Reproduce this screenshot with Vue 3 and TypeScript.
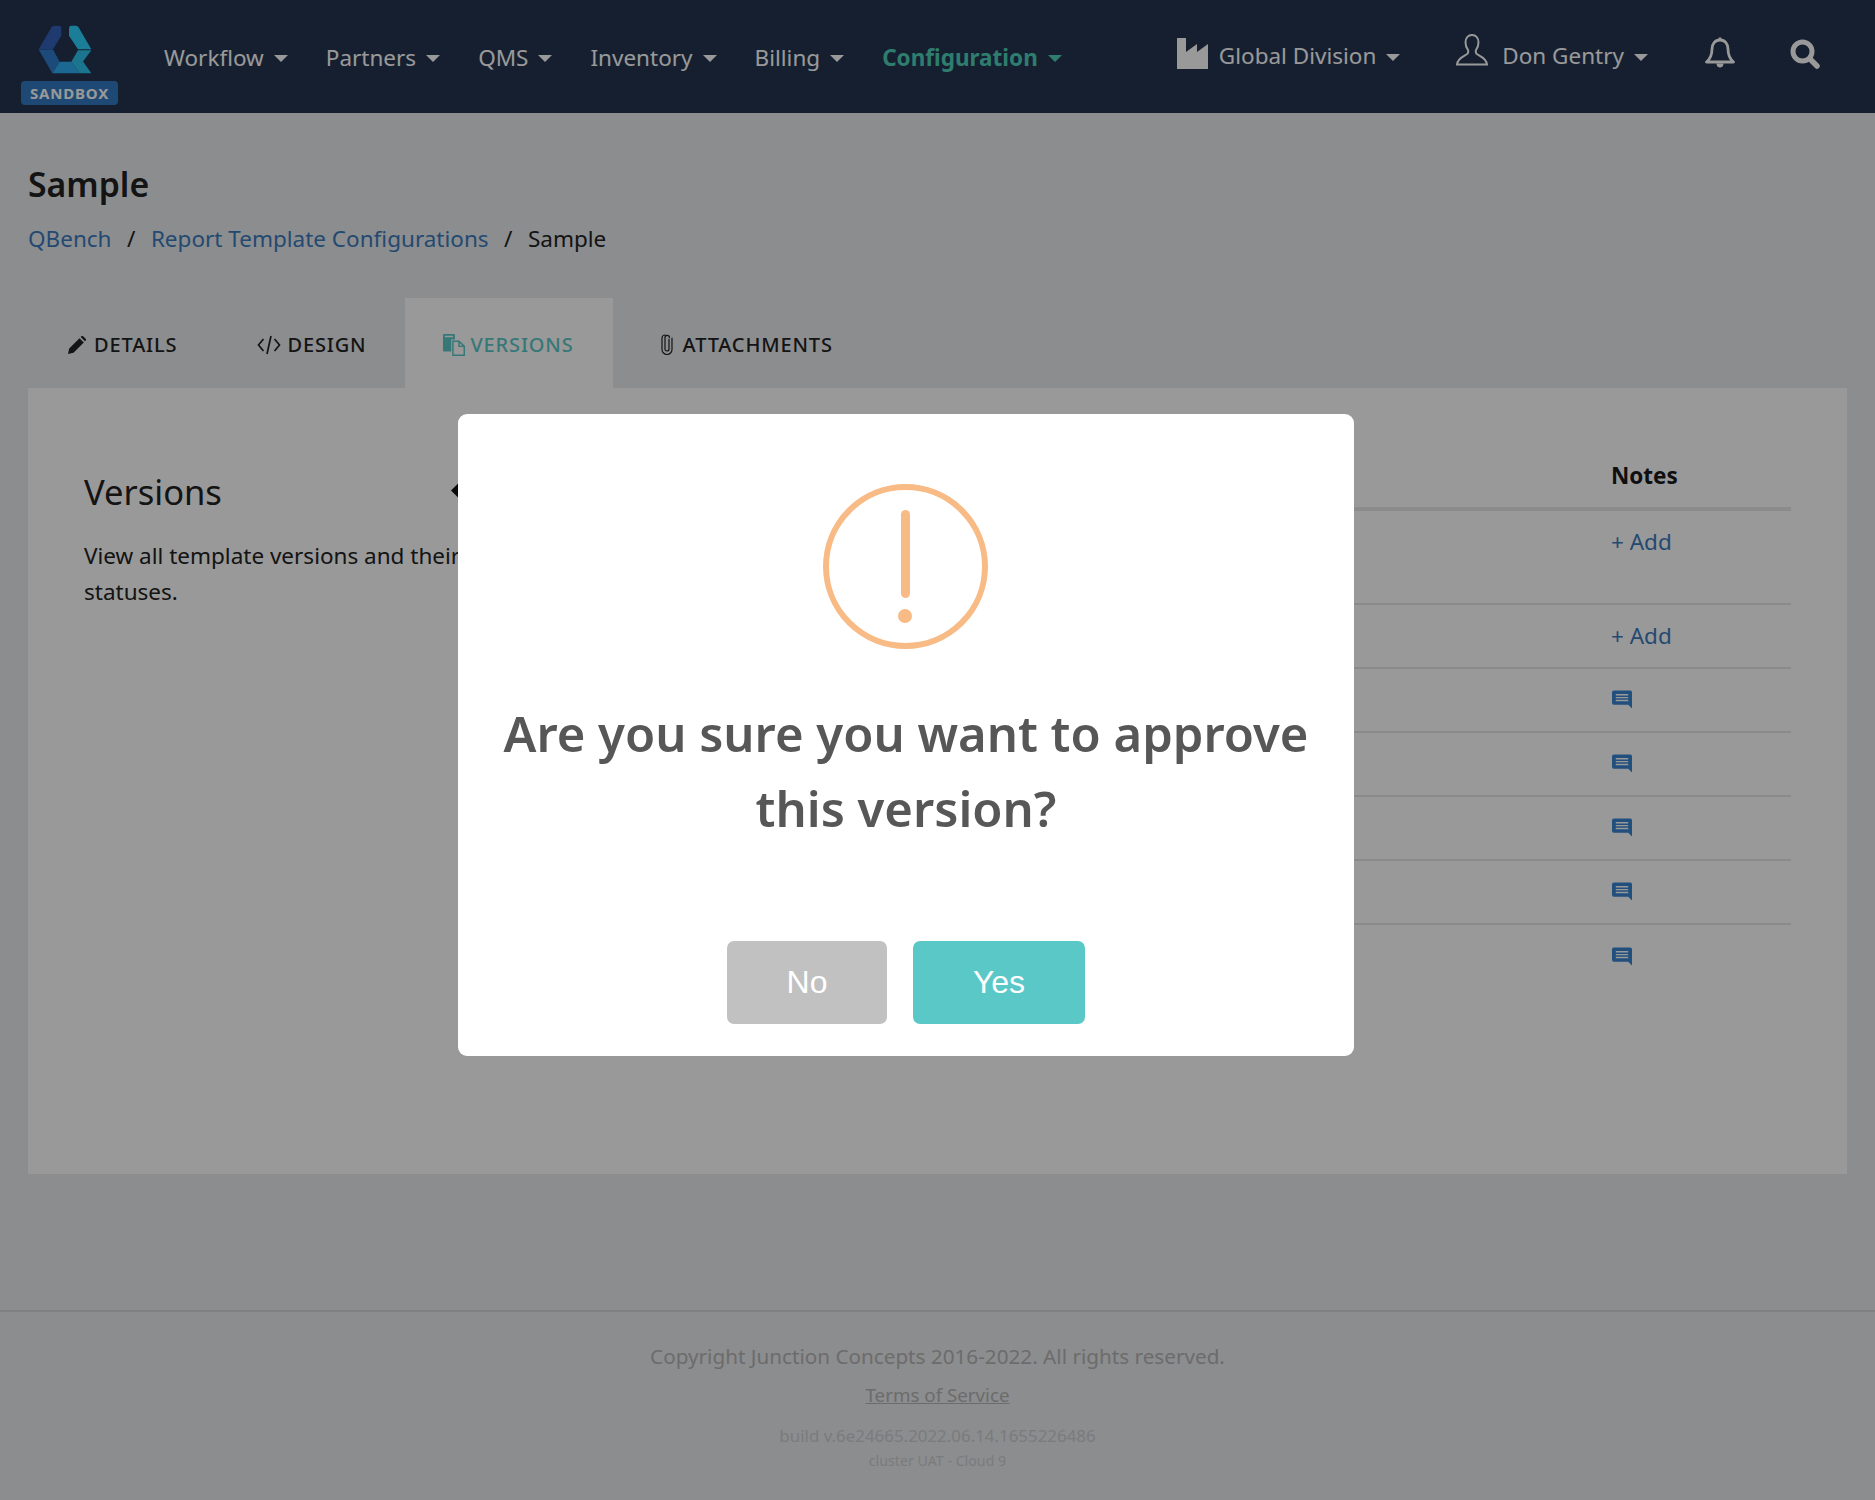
<script setup lang="ts">
interface NavItem { label: string; active?: boolean }
const navItems: NavItem[] = [
  { label: 'Workflow' },
  { label: 'Partners' },
  { label: 'QMS' },
  { label: 'Inventory' },
  { label: 'Billing' },
  { label: 'Configuration', active: true },
]
const noteRows: Array<'add' | 'note'> = ['add', 'add', 'note', 'note', 'note', 'note', 'note']
</script>

<template>
  <div class="page">
    <header class="topbar">
      <div class="brand">
        <svg class="logo" viewBox="85 43 162 146" aria-hidden="true">
          <path fill="#3262b8" d="M135 45h13q7 0 7 7v23l-25 40H87l38-65q4-5 10-5z" />
          <path fill="#307cce" d="M87 116h43l20 37-22 34z" />
          <path fill="#2db0f6" d="M150 153h35l25 34h-82z" />
          <path fill="#2ec4ee" d="M185 153l20-35h40l-25 34 25 35h-35z" />
          <path fill="#2dd2ff" d="M178 52q0-7 7-7h14q5 0 8 5l38 65h-40l-27-40z" />
        </svg>
        <span class="badge">SANDBOX</span>
      </div>

      <nav class="main-nav">
        <a v-for="item in navItems" :key="item.label" class="nav-item" :class="{ active: item.active }">
          {{ item.label }}<i class="caret"></i>
        </a>
      </nav>

      <div class="right-nav">
        <a class="nav-item division">
          <svg class="factory" viewBox="0 0 31 31" aria-hidden="true">
            <path fill="currentColor" d="M0 0h9v14l11-8v8l11-8v25H0z" />
          </svg>
          Global Division<i class="caret"></i>
        </a>
        <a class="nav-item user">
          <svg class="user-icon" viewBox="0 0 32 32" aria-hidden="true">
            <path fill="none" stroke="currentColor" stroke-width="2" d="M16 1c-4 0-6.500 3-6.500 7.500 0 3.500 1.500 6 2.500 7.500 .5 1.500 0 3.500-1.500 4.500C7 22.500 1.500 24.500 1 30.500h30c-.5-6-6-8-9.500-10-1.500-1-2-3-1.500-4.500 1-1.500 2.500-4 2.500-7.500C22.500 4 20 1 16 1z" />
          </svg>
          Don Gentry<i class="caret"></i>
        </a>
        <svg class="bell" viewBox="0 0 30 32" aria-hidden="true">
          <path fill="none" stroke="currentColor" stroke-width="2.800" stroke-linejoin="round" d="M15 4c-5 0-8 4-8 9 0 7-2 10-5.500 13h27C25 23 23 20 23 13c0-5-3-9-8-9zM15 1.500V4" />
          <path fill="currentColor" d="M11.500 27.500h7c0 2.500-1.500 4-3.500 4s-3.500-1.500-3.500-4z" />
        </svg>
        <svg class="search" viewBox="0 0 30 30" aria-hidden="true">
          <circle cx="12.500" cy="12.500" r="9.500" fill="none" stroke="currentColor" stroke-width="5" />
          <path stroke="currentColor" stroke-width="5.500" stroke-linecap="round" d="M20 20l7 7" />
        </svg>
      </div>
    </header>

    <main class="content">
      <h1 class="page-title">Sample</h1>
      <div class="crumbs">
        <a>QBench</a><span class="sep">/</span><a>Report Template Configurations</a><span class="sep">/</span><span>Sample</span>
      </div>

      <div class="tabs">
        <div class="tab">
          <svg class="tab-icon pencil" viewBox="0 0 18 18" aria-hidden="true">
            <path fill="currentColor" d="M0 18l1.200-5.500L11.500 2.200l4.300 4.300L5.500 16.800zM12.700 1l1-1q.6-.5 1.200 0l3 3q.5.6 0 1.200l-1 1z" />
          </svg>
          DETAILS
        </div>
        <div class="tab">
          <svg class="tab-icon code" viewBox="0 0 24 20" aria-hidden="true">
            <path fill="none" stroke="currentColor" stroke-width="1.700" d="M6.500 4L1.500 10l5 6M17.500 4l5 6-5 6M14 1l-4 18" />
          </svg>
          DESIGN
        </div>
        <div class="tab current">
          <svg class="tab-icon copies" viewBox="0 0 24 24" aria-hidden="true">
            <path fill="currentColor" d="M0 1q0-1 1-1h11q1 0 1 1v5H9v13H1q-1 0-1-1zM2 2v1.500h9V2z" />
            <path fill="none" stroke="currentColor" stroke-width="1.600" d="M10.800 7.800h6.700l5.700 5.700v9.700H10.800zM17.500 7.800v5.700h5.700" />
          </svg>
          VERSIONS
        </div>
        <div class="tab attach">
          <svg class="tab-icon clip" viewBox="0 0 12 21" aria-hidden="true">
            <path fill="none" stroke="currentColor" stroke-width="1.200" stroke-linecap="round" d="M8 5v10a2 2 0 0 1-4 0V3.500a2.200 2.200 0 0 1 4.400 0M11 4v11.500a5 5 0 0 1-10 0V4a3 3 0 0 1 3-3" />
          </svg>
          ATTACHMENTS
        </div>
      </div>

      <section class="panel">
        <div class="intro">
          <div class="intro-head">
            <h2>Versions</h2>
            <svg class="chev" viewBox="0 0 10 18" aria-hidden="true"><path fill="currentColor" d="M9 0L0 9l9 9z" /></svg>
          </div>
          <p>View all template versions and their statuses.</p>
        </div>
        <div class="table">
          <div class="thead"><span>Notes</span></div>
          <div v-for="(row, i) in noteRows" :key="i" class="trow" :class="{ first: i === 0 }">
            <a v-if="row === 'add'" class="add">+ Add</a>
            <svg v-else class="note" viewBox="0 0 21 19" aria-hidden="true">
              <path fill="currentColor" d="M2 0h17q2 0 2 2v17l-4-4H2q-2 0-2-2V2q0-2 2-2z" />
              <path stroke="#fff" stroke-width="1.500" d="M4 4.500h13M4 7.500h13M4 10.500h13" />
            </svg>
          </div>
        </div>
      </section>
    </main>

    <footer class="footer">
      <p class="copy">Copyright Junction Concepts 2016-2022. All rights reserved.</p>
      <a class="terms">Terms of Service</a>
      <p class="build">build v.6e24665.2022.06.14.1655226486</p>
      <p class="cluster">cluster UAT - Cloud 9</p>
    </footer>

    <div class="overlay">
      <div class="modal">
        <div class="warn-ring">
          <span class="warn-line"></span>
          <span class="warn-dot"></span>
        </div>
        <h2 class="modal-title">Are you sure you want to approve this version?</h2>
        <div class="actions">
          <button class="btn no" type="button">No</button>
          <button class="btn yes" type="button">Yes</button>
        </div>
      </div>
    </div>
  </div>
</template>

<style>
html, body { margin: 0; padding: 0; }
</style>

<style scoped>
* { box-sizing: border-box; }
.page {
  position: relative;
  display: flex;
  flex-direction: column;
  height: 1500px;
  overflow: hidden;
  background: #e9ebee;
  color: #222;
  font-family: "Noto Sans", "Open Sans", sans-serif;
}
.topbar {
  display: flex;
  align-items: center;
  flex: none;
  height: 113px;
  background: #233450;
  color: #fff;
}
.brand {
  display: flex;
  flex-direction: column;
  align-items: center;
  width: 97px;
  margin-left: 21px;
  padding-top: 17px;
}
.logo { width: 54px; height: 49px; display: block; margin-left: -9px; }
.badge {
  display: block;
  width: 97px;
  height: 24px;
  margin-top: 7px;
  border-radius: 4px;
  background: #347bc3;
  color: #fff;
  font-size: 15px;
  font-weight: 700;
  letter-spacing: 0.800px;
  line-height: 24px;
  text-align: center;
}
.main-nav {
  display: flex;
  align-items: center;
  gap: 38px;
  margin-left: 46px;
  padding-top: 1px;
}
.nav-item {
  display: flex;
  align-items: center;
  font-size: 22.500px;
  white-space: nowrap;
}
.nav-item.active { color: #4ed0b7; font-weight: 700; }
.caret {
  display: inline-block;
  width: 0;
  height: 0;
  margin-left: 10px;
  margin-top: 3px;
  border-left: 7.500px solid transparent;
  border-right: 7.500px solid transparent;
  border-top: 7.500px solid currentColor;
}
.right-nav {
  display: flex;
  align-items: center;
  margin-left: auto;
  margin-top: -2px;
  padding-right: 55px;
  color: #fff;
}
.factory { width: 31px; height: 31px; margin-right: 11px; margin-top: -4px; }
.user { margin-left: 56px; }
.user-icon { width: 32px; height: 32px; margin-right: 14px; margin-top: -11px; }
.bell { width: 30px; height: 32px; margin-left: 57px; margin-top: -7px; }
.search { width: 30px; height: 30px; margin-left: 55px; margin-top: -4px; }
.content {
  flex: 1;
  padding: 0 28px;
}
.page-title {
  margin: 48px 0 0;
  font-size: 33.750px;
  font-weight: 600;
  line-height: 46px;
  color: #222;
}
.crumbs {
  display: flex;
  margin-top: 15px;
  font-size: 22.500px;
  line-height: 34px;
}
.crumbs a { color: #3c7bbd; }
.sep { margin: 0 15.500px; }
.tabs {
  display: flex;
  margin-top: 42px;
  height: 90px;
}
.tab {
  display: flex;
  align-items: center;
  padding: 3px 40px 0;
  font-size: 20px;
  font-weight: 500;
  letter-spacing: 0.850px;
  color: #222;
}
.tab.current {
  margin-left: -1px;
  padding: 3px 39px 0 38px;
  background: #fff;
  color: #5bc8c8;
}
.tab.attach { margin-left: 8px; }
.tab-icon { flex: none; margin-right: 8px; }
.pencil { width: 18px; height: 18px; }
.code { width: 24px; height: 20px; margin-right: 6px; }
.copies { width: 22px; height: 24px; margin-right: 5px; }
.clip { width: 12px; height: 21px; margin-right: 10px; }
.panel {
  display: flex;
  height: 786px;
  padding: 56px 56px 0;
  background: #fff;
}
.intro {
  flex: none;
  width: 376px;
  padding-top: 24px;
}
.intro-head {
  display: flex;
  align-items: center;
  justify-content: space-between;
  height: 48px;
}
.intro h2 {
  margin: 0;
  font-size: 34.500px;
  font-weight: 400;
  line-height: 48px;
}
.chev { width: 9px; height: 17px; margin-top: -4px; color: #111; }
.intro p {
  margin: 22px 0 0;
  width: 410px;
  font-size: 22.500px;
  line-height: 36px;
}
.table {
  flex: 1;
  margin-left: 24px;
}
.thead {
  display: flex;
  align-items: center;
  height: 67px;
  padding-left: 1127px;
  border-bottom: 4px solid #e8e8e8;
  font-size: 22.500px;
  font-weight: 700;
  color: #1a1a1a;
}
.thead span { margin-top: -1px; }
.trow {
  display: flex;
  align-items: center;
  height: 64px;
  padding-left: 1127px;
  border-bottom: 2px solid #e6e6e6;
}
.trow.first {
  height: 94px;
  padding-bottom: 30px;
}
.trow:last-child { border-bottom: none; }
.add { margin-top: -2px; font-size: 22.500px; color: #3c7bbd; }
.note { width: 20px; height: 19px; margin-top: -2px; margin-left: 1px; color: #3985d2; }
.footer {
  flex: none;
  height: 190px;
  padding-top: 27px;
  border-top: 2px solid #d4d5d7;
  color: #b4b4b4;
  text-align: center;
}
.copy {
  margin: 0;
  font-size: 20.700px;
  line-height: 34px;
}
.terms {
  display: block;
  margin-top: 7px;
  font-size: 18.750px;
  line-height: 30px;
  text-decoration: underline;
}
.build {
  margin: 14px 0 0;
  font-size: 16.900px;
  line-height: 24px;
  color: #cdced0;
}
.cluster {
  margin: 2px 0 0;
  font-size: 14.200px;
  line-height: 22px;
  color: #cdced0;
}
.overlay {
  position: absolute;
  inset: 0;
  display: flex;
  align-items: flex-start;
  justify-content: flex-start;
  padding: 414px 0 0 458px;
  background: rgba(0, 0, 0, 0.4);
}
.modal {
  display: flex;
  flex-direction: column;
  align-items: center;
  width: 896px;
  height: 642px;
  padding-top: 70px;
  border-radius: 9px;
  background: #fff;
}
.warn-ring {
  position: relative;
  flex: none;
  width: 165px;
  height: 165px;
  margin-left: -1px;
  border: 6.500px solid #f8bb86;
  border-radius: 50%;
}
.warn-line {
  position: absolute;
  left: 71.500px;
  top: 20px;
  width: 9px;
  height: 88px;
  border-radius: 5px;
  background: #f8bb86;
}
.warn-dot {
  position: absolute;
  left: 69px;
  top: 119px;
  width: 14px;
  height: 14px;
  border-radius: 50%;
  background: #f8bb86;
}
.modal-title {
  margin: 47px 0 0;
  width: 840px;
  font-size: 49px;
  font-weight: 600;
  line-height: 75px;
  color: #575757;
  text-align: center;
}
.actions {
  display: flex;
  gap: 26px;
  margin-top: 95px;
}
.btn {
  height: 83px;
  padding: 0;
  border: none;
  border-radius: 7px;
  color: #fff;
  font-family: "Liberation Sans", Arial, sans-serif;
  font-size: 32px;
}
.no { width: 160px; background: #c1c1c1; }
.yes { width: 172px; background: #5bc8c8; }
</style>
